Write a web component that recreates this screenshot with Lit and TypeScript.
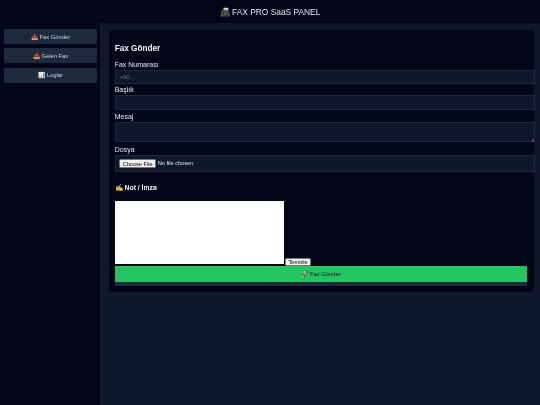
import { LitElement, html, css } from "lit";
import { customElement } from "lit/decorators.js";

@customElement("app-root")
export class AppRoot extends LitElement {
  static styles = css`
    :host { display: block; width: 540px; height: 405px; overflow: hidden; background: #0f172a; color: #e2e8f0; font-family: "Liberation Sans", Arial, sans-serif; filter: blur(0.3px); }
    * { box-sizing: border-box; }
    .header { height: 23px; background: #020617; display: flex; align-items: center; justify-content: center; font-size: 8.4px; color: #e2e8f0; }
    .layout { display: flex; height: 382px; }
    .sidebar { width: 101px; background: #020617; border-right: 1px solid #111a2c; padding: 6.3px 3px 0 4px; display: flex; flex-direction: column; gap: 4.2px; }
    .nav { height: 15px; background: #1e293b; display: flex; align-items: center; justify-content: center; font-size: 5.8px; color: #cbd5e1; }
    .main { flex: 1; min-width: 0; padding: 6.5px 6.5px 0 7.7px; }
    .card { background: #020617; height: 262px; padding: 14.5px 6px 0 6px; }
    h3 { margin: 0 0 6px; font-size: 8.2px; line-height: 10px; color: #f1f5f9; font-weight: 700; }
    h4 { margin: 0 0 7.8px; font-size: 6.8px; line-height: 10px; color: #f1f5f9; font-weight: 700; }
    label { display: block; font-size: 7px; line-height: 9px; color: #e2e8f0; margin-bottom: 1.2px; }
    .in { display: block; width: 420.3px; background: #0f172a; border: 0.5px solid #1e293b; color: #e2e8f0; font-family: inherit; font-size: 5.8px; padding: 0 4px; margin: 0 0 1.7px; outline: none; border-radius: 0; }
    .in::placeholder { color: #64748b; }
    .first { height: 13.4px; }
    .second { height: 14.6px; }
    .ta { position: relative; width: 420.3px; height: 20.3px; margin-bottom: 3px; }
    .ta textarea { width: 100%; height: 100%; margin: 0; resize: none; }
    .ta::after { content: ""; position: absolute; right: 0.5px; bottom: 0.5px; width: 3.5px; height: 3.5px; background: linear-gradient(135deg, transparent 50%, #475569 50%); opacity: 0.8; }
    .filebox { height: 16.4px; padding: 0 3.5px; display: flex; align-items: center; margin-bottom: 11.2px; }
    .filebox input { zoom: 0.42; color: #e2e8f0; }
    .sign { display: flex; align-items: flex-end; gap: 1.5px; height: 65.7px; }
    .canvas { width: 169px; height: 63.7px; background: #fff; margin-bottom: 2px; }
    .clear { zoom: 0.43; width: 60px; height: 19px; padding: 0; font-family: inherit; }
    .submit { width: 412.6px; height: 19.4px; background: #1e293b; display: block; border: 0; padding: 0 0 4px; font-family: inherit; }
    .submit span { display: flex; height: 15.4px; background: #22c55e; align-items: center; justify-content: center; font-size: 5.8px; color: #0f172a; }
  `;
  render() {
    return html`
      <div class="header">📠 FAX PRO SaaS PANEL</div>
      <div class="layout">
        <div class="sidebar">
          <div class="nav">📤 Fax Gönder</div>
          <div class="nav">📥 Gelen Fax</div>
          <div class="nav">📊 Loglar</div>
        </div>
        <div class="main">
          <div class="card">
            <h3>Fax Gönder</h3>
            <label>Fax Numarası</label>
            <input class="in first" placeholder="+90..." />
            <label>Başlık</label>
            <input class="in second" />
            <label>Mesaj</label>
            <div class="ta"><textarea class="in"></textarea></div>
            <label>Dosya</label>
            <div class="in filebox"><input type="file" /></div>
            <h4>✍️ Not / İmza</h4>
            <div class="sign">
              <div class="canvas"></div>
              <button class="clear">Temizle</button>
            </div>
            <button class="submit"><span>🚀 Fax Gönder</span></button>
          </div>
        </div>
      </div>
    `;
  }
}
